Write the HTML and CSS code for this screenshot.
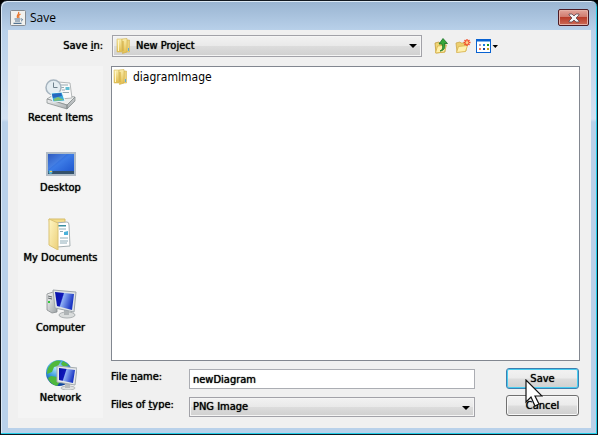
FILE: index.html
```html
<!DOCTYPE html>
<html lang="en">
<head>
<meta charset="utf-8">
<title>Save</title>
<link rel="stylesheet" href="styles.css">
</head>
<body>
<svg class="defs" width="0" height="0" aria-hidden="true">
  <defs>
    <linearGradient id="fold" x1="0" x2="1" y1="0" y2="1"><stop offset="0" stop-color="#fff6c4"/><stop offset="1" stop-color="#ecd079"/></linearGradient>
    <linearGradient id="leaf" x1="0" x2="0" y1="0" y2="1"><stop offset="0" stop-color="#fbeeae"/><stop offset="1" stop-color="#e2bc4c"/></linearGradient>
    <linearGradient id="blue" x1="0" x2="1" y1="0" y2="1"><stop offset="0" stop-color="#1740ae"/><stop offset=".45" stop-color="#3c7be6"/><stop offset="1" stop-color="#1b52cc"/></linearGradient>
    <linearGradient id="screen" x1="0" x2="1" y1="0" y2=".3"><stop offset="0" stop-color="#0510a8"/><stop offset=".42" stop-color="#1018b8"/><stop offset=".48" stop-color="#8fb0f4"/><stop offset="1" stop-color="#1a35c4"/></linearGradient>
    <linearGradient id="metal" x1="0" x2="1" y1="0" y2="1"><stop offset="0" stop-color="#fafafa"/><stop offset="1" stop-color="#9aa0a3"/></linearGradient>
    <radialGradient id="globe" cx=".4" cy=".3" r=".7"><stop offset="0" stop-color="#b9ecff"/><stop offset=".5" stop-color="#3a9ce0"/><stop offset="1" stop-color="#0b3f98"/></radialGradient>
    <symbol id="folder" viewBox="0 0 16 16">
      <path d="M1 1h5v13H1z" fill="url(#leaf)" stroke="#d9bf62" stroke-width=".6"/>
      <path d="M2.500 2v11" stroke="#fff6c8"/>
      <path d="M9 2h4.500v12H9z" fill="#edd27a" stroke="#d4b656" stroke-width=".6"/>
      <path d="M6 1l5-.5V14l-4.500 1.500z" fill="url(#leaf)" stroke="#cfae49" stroke-width=".6"/>
      <path d="M7 3v10" stroke="#d1aa3c"/>
      <path d="M12.500 10v3" stroke="#59a9dd"/>
    </symbol>
  </defs>
</svg>
<div class="window">
  <header class="titlebar">
    <svg class="app-icon" viewBox="0 0 16 16" aria-hidden="true">
      <rect x=".5" y=".5" width="15" height="15" rx="1" fill="#f1f1ee" stroke="#858b91"/>
      <path d="M8.500 2C10 4 6 5 7.500 8M10.500 4C8 5.500 8.500 6 9 8" fill="none" stroke="#e8752b" stroke-width="1.300"/>
      <path d="M4.500 9h6M5 11h5M3.500 13.300h8" stroke="#527391" stroke-width="1.200"/>
      <path d="M11 9c2-.5 2 1.500 0 2" fill="none" stroke="#527391"/>
    </svg>
    <h1 class="title">Save</h1>
    <button class="close" type="button" aria-label="Close">
      <svg viewBox="0 0 12 10" width="12" height="10"><path d="M1 1h3l2 2 2-2h3v1L8 5l3 3v1H8L6 7 4 9H1V8l3-3-3-3z" fill="#f5f5f5" stroke="#5a4650" stroke-width=".8"/></svg>
    </button>
  </header>
  <form class="content">
    <div class="toolbar">
      <label class="look-label" for="look">Save <u>i</u>n:</label>
      <div class="combo look">
        <svg class="combo-icon" aria-hidden="true"><use href="#folder"/></svg>
        <select id="look"><option>New Project</option></select>
      </div>
      <button class="tool" type="button" aria-label="Up one level">
        <svg viewBox="0 0 16 16" width="16" height="16"><path d="M1 5l4-1 1 1h5v9l-9 1z" fill="#f0d677" stroke="#c19a3b" stroke-width=".8"/><path d="M1.500 15l2-7 9-1-2 7z" fill="#fff0a9" stroke="#d5ae45" stroke-width=".8"/><path d="M6 13c3-1 3-4 2-7H5l4-5.500L13.500 5.500h-3c1 4 0 7-4.500 7.500z" fill="#37a83b" stroke="#176e24" stroke-width=".8"/></svg>
      </button>
      <button class="tool" type="button" aria-label="New folder">
        <svg viewBox="0 0 16 16" width="16" height="16"><path d="M1 5l4-1 1 1h5v8l-9 1z" fill="#edcf70" stroke="#cda84c" stroke-width=".8"/><path d="M1.500 14.500l2-6 9-1-2 6z" fill="#fff1ae" stroke="#d8b34d" stroke-width=".8"/><path d="M12 1v7M8.500 4.500h7M9.500 2l5 5M14.500 2l-5 5" stroke="#f04a24" stroke-width="1.300"/><circle cx="12" cy="4.500" r="1.500" fill="#ffd08c"/></svg>
      </button>
      <button class="tool view" type="button" aria-label="View menu">
        <svg viewBox="0 0 22 16" width="22" height="16"><rect x=".5" y="1.500" width="14" height="13" fill="#fff" stroke="#0862d2"/><path d="M0 2.500h15" stroke="#0862d2" stroke-width="2"/><path d="M3 6h2v2H3z" fill="#a99bc6"/><path d="M7 6h2v2H7z" fill="#1778e0"/><path d="M11 6h2v2h-2z" fill="#199326"/><path d="M3 10h2v2H3z" fill="#f47a58"/><path d="M7 10h2v2H7z" fill="#153e9c"/><path d="M11 10h2v2h-2z" fill="#c49b18"/><path d="M16.500 7H22l-2.700 3z"/></svg>
      </button>
    </div>
    <div class="main">
      <nav class="places" aria-label="Places">
        <button class="place" type="button">
          <svg viewBox="0 0 32 32" width="32" height="32"><path d="M2 21l8-5 20 3-8 8z" fill="#eceeee" stroke="#a5aaab"/><path d="M2 21l20 6v4L2 25zM22 27l8-8v4l-8 8z" fill="url(#metal)" stroke="#7f8687" stroke-width=".7"/><path d="M13 4l12 1 2 15-12 1z" fill="#fafafa" stroke="#b5b9ba"/><path d="M16 7h7M16 9.500h3M17 12h3M17 14.500h7" stroke="#96a9b0"/><path d="M20.500 9h4v3h-4z" fill="#60bdd1"/><circle cx="8.500" cy="9.500" r="7.500" fill="#e4edf2" stroke="#a6b4bf" stroke-width="1.500"/><path d="M8.500 4.500v5h4" fill="none" stroke="#6e818d"/><path d="M6 15l11-1 3 9-12 1z" fill="#3baedb" stroke="#eff6f8"/><path d="M7 16l9-1 1 3-9 2z" fill="#2665bf"/><path d="M9 21l4-2 6 3-10 1z" fill="#81bf70"/></svg>
          <span>Recent Items</span>
        </button>
        <button class="place" type="button">
          <svg viewBox="0 0 32 32" width="32" height="32"><rect x="1.500" y="4.500" width="29" height="23" fill="#aebdca" stroke="#b3bbc4"/><rect x="3" y="6" width="26" height="20" fill="url(#blue)"/><path d="M3 6h19L3 22z" fill="#75a6f3" opacity=".25"/><path d="M3 23h26v3H3z" fill="#34516b"/><circle cx="5.500" cy="24" r="2" fill="#53b4d6"/><path d="M5 23h2v1H5z" fill="#f5c75b"/></svg>
          <span>Desktop</span>
        </button>
        <button class="place" type="button">
          <svg viewBox="0 0 32 32" width="32" height="32"><path d="M4 1h16v25H8z" fill="#f3dc89" stroke="#d7bd6b"/><path d="M10 5l12-1q2 0 2 3l1 21-13 1z" fill="#fff" stroke="#a6b0b3"/><path d="M14 11h7M15 13.500h3M15 20h8M15 23h8M15 25h7" stroke="#8eacb8"/><path d="M13 7h8v1.500h-8z" fill="#3b8ea0"/><path d="M19 14l4-1v4h-4z" fill="#4ab1da"/><path d="M4 1l9 4v27L4 27z" fill="url(#fold)" stroke="#dbc374"/></svg>
          <span>My Documents</span>
        </button>
        <button class="place" type="button">
          <svg viewBox="0 0 32 32" width="32" height="32"><path d="M2 6l6-2 4 1v19l-5 1-5-3z" fill="url(#metal)" stroke="#868c8e" stroke-width=".8"/><path d="M3 8l4 1M3 10l4 1" stroke="#62696b"/><path d="M3 13h2v2H3z" fill="#32c83b"/><ellipse cx="22" cy="27" rx="8" ry="3" fill="#dadddd" stroke="#abb0b2"/><path d="M19 21l5 1v5h-5z" fill="#afb4b6"/><path d="M8 2l23 2-2 20L10 20z" fill="#dfe3e5" stroke="#a0a7ab"/><path d="M10 4l19 2-2 16-15-4z" fill="url(#screen)"/></svg>
          <span>Computer</span>
        </button>
        <button class="place" type="button">
          <svg viewBox="0 0 32 32" width="32" height="32"><circle cx="14" cy="15" r="13" fill="url(#globe)"/><path d="M5 7c4-5 8-5 11-4l-3 5-4 1-2 5-5 2c0-4 1-7 3-9zM6 18l6 1 3 5-3 4c-4-1-8-4-9-8zM18 3l6 4-5 2-3-3z" fill="#50b83d"/><ellipse cx="23" cy="30" rx="7" ry="2" fill="#e0e2e2" stroke="#b5b9ba"/><path d="M20 25h5v5h-5z" fill="#b7bbbd"/><path d="M12 8l20 2-2 17-18-3z" fill="#e5e8ea" stroke="#a4abae"/><path d="M14 10l16 2-2 13-14-3z" fill="url(#screen)"/></svg>
          <span>Network</span>
        </button>
      </nav>
      <div class="work">
        <ul class="files" aria-label="Files">
          <li class="file"><svg width="16" height="16" aria-hidden="true"><use href="#folder"/></svg><span>diagramImage</span></li>
        </ul>
        <div class="bottom">
          <div class="fields">
            <label for="name">File <u>n</u>ame:</label>
            <input id="name" type="text" value="newDiagram">
            <label for="type">Files of <u>t</u>ype:</label>
            <div class="combo">
              <select id="type"><option>PNG Image</option></select>
            </div>
          </div>
          <div class="actions">
            <button class="action primary" type="button">Save</button>
            <button class="action" type="button">Cancel</button>
            <svg class="pointer" viewBox="0 0 18 28" width="18" height="28" aria-hidden="true"><path d="M1 1v22l5-5 4 9 4-2-4-8h7z" fill="#fff" stroke="#111" stroke-width="1.200"/></svg>
          </div>
        </div>
      </div>
    </div>
  </form>
</div>
</body>
</html>
```
FILE: styles.css
```css
* { box-sizing: border-box; }
body {
  margin: 0;
  background: #000;
  color: #000;
  font: 400 11px/16px "DejaVu Sans Condensed", "DejaVu Sans", sans-serif;
  text-shadow: 0 0 1px #000;
}
button, input, select { font: inherit; color: inherit; text-shadow: inherit; margin: 0; }
.defs { position: absolute; }
.window {
  min-height: 100vh;
  display: flex;
  flex-direction: column;
  padding: 0 6px 6px 7px;
  border: 1px solid #111820;
  border-radius: 7px 7px 0 0;
  background: linear-gradient(#99b4d1, #b9d1ea 30px, #d3e1f2 118px, #b9d1ea 121px);
  box-shadow: inset -1px -1px #22cde8, inset 1px 1px #dce9f5;
}
.titlebar {
  height: 29px;
  display: flex;
  align-items: center;
  gap: 4px;
  padding: 4px 2px 0;
}
.app-icon { width: 16px; height: 16px; }
.title { margin: 0; flex: 1; font: 400 12px/16px "Open Sans", sans-serif; text-shadow: none; }
.close {
  width: 31px;
  height: 17px;
  padding: 0;
  display: grid;
  place-items: center;
  border: 1px solid #4e1c25;
  border-radius: 2px;
  background: linear-gradient(#e3a59b, #cf786c 48%, #b93c2a 50%, #cc6b56);
  box-shadow: inset 0 0 0 1px #e5b0a6;
}
.content {
  flex: 1;
  display: flex;
  flex-direction: column;
  gap: 9px;
  padding: 5px 11px 10px 10px;
  background: #f0f0f0;
}
.toolbar { display: flex; align-items: center; gap: 5px; padding-right: 82px; }
.look-label { width: 89px; padding-right: 4px; text-align: right; }
.combo { position: relative; display: flex; }
.look { flex: 1; margin-right: 7px; }
.combo select {
  appearance: none;
  width: 100%;
  height: 20px;
  padding: 0 20px 0 3px;
  border: 1px solid #a2a2a8;
  border-radius: 0;
  background: linear-gradient(#f2f2f2, #e9e9e9 49%, #dcdcdc 51%, #d0d0d0);
  box-shadow: inset 0 0 0 1px #f5f5f5;
}
.combo.look select { height: 22px; padding-left: 23px; }
.combo::after {
  content: "";
  position: absolute;
  right: 5px;
  top: 9px;
  border: 4px solid transparent;
  border-top-color: #000;
  border-bottom: 0;
}
.combo-icon { position: absolute; left: 4px; top: 3px; width: 16px; height: 16px; }
.tool { width: 16px; height: 16px; padding: 0; border: 0; background: none; display: flex; }
.tool.view { width: 22px; }
.main { flex: 1; display: flex; gap: 8px; }
.places { width: 85px; background: #f4f4f4; }
.place {
  width: 100%;
  height: 70px;
  padding: 12px 0 0;
  display: flex;
  flex-direction: column;
  align-items: center;
  border: 0;
  background: none;
  white-space: nowrap;
}
.work { flex: 1; display: flex; flex-direction: column; gap: 7px; }
.files {
  flex: 1;
  margin: 0;
  padding: 2px 1px;
  list-style: none;
  border: 1px solid #828790;
  background: #fff;
  font-size: 12px;
  text-shadow: none;
}
.file { display: flex; align-items: center; gap: 4px; }
.bottom { display: flex; gap: 31px; padding: 0 1px 1px 0; }
.fields {
  flex: 1;
  display: grid;
  grid-template-columns: 78px 1fr;
  row-gap: 8px;
  padding-top: 1px;
}
.fields input {
  width: 100%;
  height: 20px;
  padding: 0 3px;
  border: 1px solid #abadb3;
  background: #fff;
}
.actions { position: relative; width: 73px; display: flex; flex-direction: column; gap: 6px; }
.action {
  height: 21px;
  padding: 0;
  border: 1px solid #707070;
  border-radius: 3px;
  background: linear-gradient(#f2f2f2, #ebebeb 49%, #dddddd 51%, #cfcfcf);
  box-shadow: inset 0 0 0 1px #f8f8f8;
}
.primary { border-color: #3c7fb1; box-shadow: inset 0 0 0 1px #48cdf0; }
.pointer { position: absolute; left: 19px; top: 11px; }
```
